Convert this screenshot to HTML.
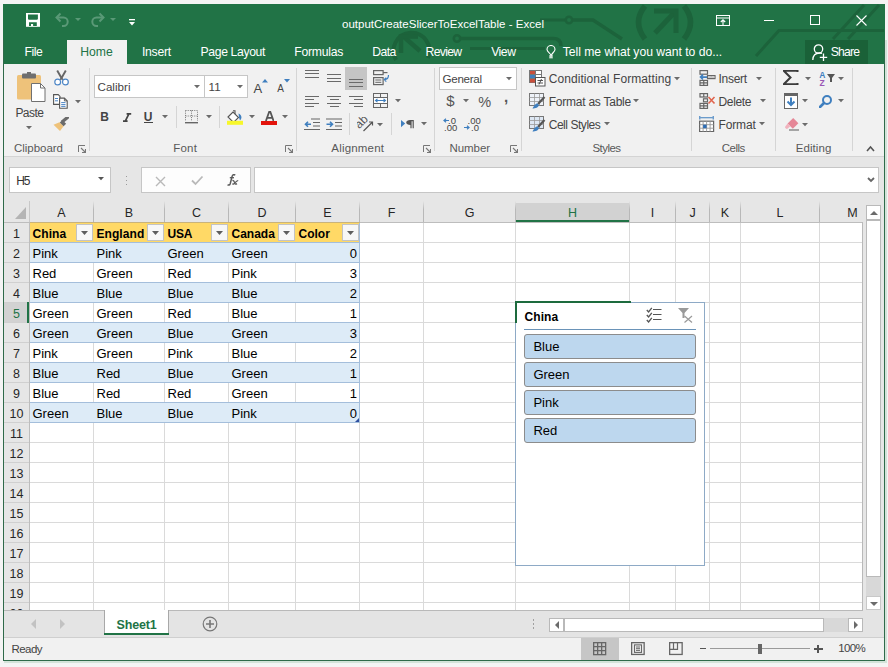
<!DOCTYPE html>
<html><head><meta charset="utf-8"><style>
html,body{margin:0;padding:0;}
body{width:888px;height:667px;position:relative;overflow:hidden;background:#f2f2f2;font-family:"Liberation Sans", sans-serif;}
.a{position:absolute;}
.t{position:absolute;white-space:nowrap;line-height:1;}
</style></head><body>
<div class="a" style="left:0px;top:0px;width:888px;height:667px;background:#f4f4f4;"></div>
<div class="a" style="left:3px;top:4px;width:882px;height:657px;background:#217346;"></div>
<div class="a" style="left:4px;top:40px;width:880px;height:620px;background:#f1f1f1;"></div>
<div class="a" style="left:4px;top:4px;width:880px;height:60px;background:#217346;"></div>
<svg class="a" style="left:0px;top:0px" width="888" height="64" viewBox="0 0 888 64"><g fill="none" stroke="#1c633b" stroke-linecap="butt">
<path d="M 396 60 A 18 18 0 1 1 428 58" stroke-width="4"/>
<path d="M 420 51 L 404 37" stroke-width="4.5"/>
<path d="M 401 53 V 36.5 H 418" stroke-width="4.5"/>
<circle cx="457" cy="38.5" r="3.2" stroke-width="2.5"/>
<path d="M 460.5 38.5 L 553 38.5 Q 561 38.5 561 46" stroke-width="3.5"/>
<path d="M 470 48.5 L 545 48.5" stroke-width="3"/>
<path d="M 540 20 L 565.5 20" stroke-width="3"/>
<circle cx="569" cy="20" r="3.2" stroke-width="2.5"/>
<path d="M 572.5 20 L 593 20 L 622 39" stroke-width="3.5"/>
<path d="M 645 6 Q 632 22 645 39" stroke-width="5.5"/>
<path d="M 684 6 Q 697 22 684 39" stroke-width="5.5"/>
<path d="M 655 33 L 674 13" stroke-width="5"/>
<path d="M 654 11 H 676 V 33" stroke-width="5"/>
<path d="M 756 56 L 779 30.5 L 884 30.5" stroke-width="3"/>
<path d="M 833 39 L 864 5" stroke-width="3"/>
<path d="M 848 39 L 879 5" stroke-width="3"/>
</g></svg>
<svg class="a" style="left:26px;top:12.8px" width="14" height="14" viewBox="0 0 14 14"><rect x="0" y="0" width="14" height="13.8" fill="#fff"/>
<path d="M2 1.4 H11.9 V6 L11.2 6.8 H2.7 L2 6 Z" fill="#217346"/>
<path d="M3 9.2 H10.8 V13.1 H7.1 V11 H5 V13.1 H3 Z" fill="#217346"/></svg>
<svg class="a" style="left:54px;top:12px" width="16" height="15" viewBox="0 0 16 15"><path d="M3 5.5 H9.5 A4.2 4.2 0 0 1 9.5 13.9 H8" fill="none" stroke="#5a9977" stroke-width="2"/>
<path d="M6.5 1.5 L2.5 5.5 L6.5 9.5" fill="none" stroke="#5a9977" stroke-width="2"/></svg>
<svg class="a" style="left:75px;top:18px" width="6" height="3" viewBox="0 0 6 3"><polygon points="0,0 6,0 3,3" fill="#5a9977"/></svg>
<svg class="a" style="left:89.5px;top:12px" width="16" height="15" viewBox="0 0 16 15"><path d="M13 5.5 H6.5 A4.2 4.2 0 0 0 6.5 13.9 H8" fill="none" stroke="#5a9977" stroke-width="2"/>
<path d="M9.5 1.5 L13.5 5.5 L9.5 9.5" fill="none" stroke="#5a9977" stroke-width="2"/></svg>
<svg class="a" style="left:109.5px;top:18px" width="6" height="3" viewBox="0 0 6 3"><polygon points="0,0 6,0 3,3" fill="#5a9977"/></svg>
<svg class="a" style="left:128.5px;top:18.5px" width="6" height="7" viewBox="0 0 6 7"><rect x="0" y="0" width="6" height="1.3" fill="#fff"/><polygon points="0,3 6,3 3,6.5" fill="#fff"/></svg>
<span class="t" id="t0" style="left:443.00px;top:18.87px;font-size:11.5px;color:#ffffff;letter-spacing:0.017px;transform:translateX(-50%);">outputCreateSlicerToExcelTable - Excel</span>
<svg class="a" style="left:715.5px;top:14.5px" width="14" height="11" viewBox="0 0 14 11"><rect x="0.5" y="0.5" width="13" height="10" fill="none" stroke="#fff" stroke-width="1"/>
<line x1="0.5" y1="3" x2="13.5" y2="3" stroke="#fff"/>
<path d="M7 10 V5 M4.8 7 L7 4.8 L9.2 7" fill="none" stroke="#fff" stroke-width="1.1"/></svg>
<div class="a" style="left:764px;top:20px;width:10px;height:1px;background:#ffffff;"></div>
<div class="a" style="left:810px;top:15px;width:10px;height:10px;border:1px solid #ffffff;box-sizing:border-box;"></div>
<svg class="a" style="left:855.5px;top:14.8px" width="11" height="11" viewBox="0 0 11 11"><path d="M0.5 0.5 L10.5 10.5 M10.5 0.5 L0.5 10.5" stroke="#fff" stroke-width="1.1"/></svg>
<div class="a" style="left:67px;top:40px;width:60px;height:24px;background:#f1f1f1;"></div>
<span class="t" id="t1" style="left:24.50px;top:46.17px;font-size:12.2px;color:#ffffff;letter-spacing:-0.485px;">File</span>
<span class="t" id="t2" style="left:80.20px;top:46.17px;font-size:12.2px;color:#217346;letter-spacing:0.021px;">Home</span>
<span class="t" id="t3" style="left:141.90px;top:46.17px;font-size:12.2px;color:#ffffff;letter-spacing:-0.247px;">Insert</span>
<span class="t" id="t4" style="left:200.60px;top:46.17px;font-size:12.2px;color:#ffffff;letter-spacing:-0.368px;">Page Layout</span>
<span class="t" id="t5" style="left:294.30px;top:46.17px;font-size:12.2px;color:#ffffff;letter-spacing:-0.250px;">Formulas</span>
<span class="t" id="t6" style="left:372.30px;top:46.17px;font-size:12.2px;color:#ffffff;letter-spacing:-0.562px;">Data</span>
<span class="t" id="t7" style="left:425.60px;top:46.17px;font-size:12.2px;color:#ffffff;letter-spacing:-0.678px;">Review</span>
<span class="t" id="t8" style="left:491.20px;top:46.17px;font-size:12.2px;color:#ffffff;letter-spacing:-0.476px;">View</span>
<svg class="a" style="left:545.5px;top:44.5px" width="10" height="14" viewBox="0 0 10 14"><path d="M5 12.5 V10.5 C5 8.5 1 7 1 4.5 A4 4 0 0 1 9 4.5 C9 7 5.5 8 5.5 10.5" fill="none" stroke="#fff" stroke-width="1.1"/>
<path d="M3 11 H7 M3.2 12.8 H6.8" stroke="#fff" stroke-width="1"/></svg>
<span class="t" id="t9" style="left:562.70px;top:46.17px;font-size:12.2px;color:#ffffff;letter-spacing:-0.035px;">Tell me what you want to do...</span>
<div class="a" style="left:805px;top:40px;width:63px;height:24px;background:#1a6138;"></div>
<svg class="a" style="left:812px;top:43.5px" width="16" height="18" viewBox="0 0 16 18"><circle cx="6.5" cy="5" r="4.2" fill="none" stroke="#fff" stroke-width="1.3"/>
<path d="M0.8 16 C1 11.5 3.5 9 7.5 9 C8.5 9 9.5 9.2 10 9.5" fill="none" stroke="#fff" stroke-width="1.3"/>
<path d="M11.5 9.5 V17 M7.8 13.3 H15.2" stroke="#fff" stroke-width="1.3"/></svg>
<span class="t" id="t10" style="left:830.70px;top:46.17px;font-size:12.2px;color:#ffffff;letter-spacing:-0.766px;">Share</span>
<div class="a" style="left:4px;top:64px;width:880px;height:92px;background:#f1f1f1;"></div>
<div class="a" style="left:4px;top:156px;width:880px;height:1px;background:#d4d4d4;"></div>
<span class="t" id="t11" style="left:14.00px;top:142.97px;font-size:11.5px;color:#595959;letter-spacing:-0.026px;">Clipboard</span>
<span class="t" id="t12" style="left:173.30px;top:142.97px;font-size:11.5px;color:#595959;letter-spacing:0.171px;">Font</span>
<span class="t" id="t13" style="left:331.30px;top:142.97px;font-size:11.5px;color:#595959;letter-spacing:0.184px;">Alignment</span>
<span class="t" id="t14" style="left:449.50px;top:142.97px;font-size:11.5px;color:#595959;letter-spacing:-0.068px;">Number</span>
<span class="t" id="t15" style="left:592.40px;top:142.97px;font-size:11.5px;color:#595959;letter-spacing:-0.538px;">Styles</span>
<span class="t" id="t16" style="left:721.80px;top:142.97px;font-size:11.5px;color:#595959;letter-spacing:-0.552px;">Cells</span>
<span class="t" id="t17" style="left:795.70px;top:142.97px;font-size:11.5px;color:#595959;letter-spacing:0.075px;">Editing</span>
<svg class="a" style="left:78px;top:144.5px" width="8" height="8" viewBox="0 0 8 8"><path d="M0.5 7 V0.5 H7" fill="none" stroke="#777" stroke-width="1"/><path d="M3 3 L7.5 7.5 M4 7.5 H7.5 V4" fill="none" stroke="#777" stroke-width="1.1"/></svg>
<svg class="a" style="left:285px;top:144.5px" width="8" height="8" viewBox="0 0 8 8"><path d="M0.5 7 V0.5 H7" fill="none" stroke="#777" stroke-width="1"/><path d="M3 3 L7.5 7.5 M4 7.5 H7.5 V4" fill="none" stroke="#777" stroke-width="1.1"/></svg>
<svg class="a" style="left:423px;top:144.5px" width="8" height="8" viewBox="0 0 8 8"><path d="M0.5 7 V0.5 H7" fill="none" stroke="#777" stroke-width="1"/><path d="M3 3 L7.5 7.5 M4 7.5 H7.5 V4" fill="none" stroke="#777" stroke-width="1.1"/></svg>
<svg class="a" style="left:510px;top:144.5px" width="8" height="8" viewBox="0 0 8 8"><path d="M0.5 7 V0.5 H7" fill="none" stroke="#777" stroke-width="1"/><path d="M3 3 L7.5 7.5 M4 7.5 H7.5 V4" fill="none" stroke="#777" stroke-width="1.1"/></svg>
<div class="a" style="left:89px;top:68px;width:1px;height:83px;background:#d5d5d5;"></div>
<div class="a" style="left:296px;top:68px;width:1px;height:83px;background:#d5d5d5;"></div>
<div class="a" style="left:434px;top:68px;width:1px;height:83px;background:#d5d5d5;"></div>
<div class="a" style="left:521px;top:68px;width:1px;height:83px;background:#d5d5d5;"></div>
<div class="a" style="left:691px;top:68px;width:1px;height:83px;background:#d5d5d5;"></div>
<div class="a" style="left:775px;top:68px;width:1px;height:83px;background:#d5d5d5;"></div>
<div class="a" style="left:852px;top:68px;width:1px;height:83px;background:#d5d5d5;"></div>
<svg class="a" style="left:865.5px;top:144.5px" width="9" height="8" viewBox="0 0 9 8"><path d="M1 6 L4.5 2 L8 6" fill="none" stroke="#555" stroke-width="1.6"/></svg>
<svg class="a" style="left:16.5px;top:72px" width="30" height="31" viewBox="0 0 30 31"><rect x="0" y="3" width="24" height="24.5" rx="1.5" fill="#eec27a"/>
<rect x="5" y="1.5" width="14" height="5" rx="1" fill="#6f6f6f"/>
<rect x="10" y="0" width="4" height="3" fill="#6f6f6f"/>
<path d="M14.5 11.5 H23.5 L28 16 V29.5 H14.5 Z" fill="#fff" stroke="#707070" stroke-width="1"/>
<path d="M23.5 11.5 V16 H28" fill="none" stroke="#707070" stroke-width="1"/></svg>
<span class="t" id="t18" style="left:15.40px;top:106.94px;font-size:12px;color:#444444;letter-spacing:-0.558px;">Paste</span>
<svg class="a" style="left:25.6px;top:126.4px" width="6" height="4" viewBox="0 0 6 4"><polygon points="0,0 6,0 3,3.2" fill="#6b6b6b"/></svg>
<svg class="a" style="left:53.5px;top:70px" width="15" height="16" viewBox="0 0 15 16"><path d="M3.2 0.5 L7.5 8 L11.8 0.5" fill="none" stroke="#666" stroke-width="1.9"/>
<path d="M7.5 8 L4.8 11 M7.5 8 L10.2 11" stroke="#666" stroke-width="1.3"/>
<circle cx="3.7" cy="12" r="2.9" fill="#fff" stroke="#4d86c6" stroke-width="1.2"/>
<circle cx="11.4" cy="12" r="2.9" fill="#fff" stroke="#4d86c6" stroke-width="1.2"/></svg>
<svg class="a" style="left:52.7px;top:93.5px" width="15" height="15" viewBox="0 0 15 15"><path d="M0.6 0.6 H5.2 L7 2.4 V10.4 H0.6 Z" fill="#fff" stroke="#555" stroke-width="1.1"/>
<path d="M6.6 4.1 H11.4 L14.2 6.9 V14.2 H6.6 Z" fill="#fff" stroke="#555" stroke-width="1.1"/>
<path d="M11.4 4.1 V6.9 H14.2" fill="none" stroke="#555" stroke-width="0.9"/>
<path d="M2 4.5 H5 M2 6.8 H5 M8.2 8.6 H12.5 M8.2 10.6 H12.5 M8.2 12.4 H12.5" stroke="#4d86c6" stroke-width="1"/></svg>
<svg class="a" style="left:74.6px;top:99.60000000000001px" width="6" height="4" viewBox="0 0 6 4"><polygon points="0,0 6,0 3,3.2" fill="#6b6b6b"/></svg>
<svg class="a" style="left:53.3px;top:117px" width="16" height="15" viewBox="0 0 16 15"><path d="M9 5 L15.5 -0.5" stroke="#6b6b6b" stroke-width="3.2"/>
<path d="M6.5 5.2 L10.6 9.2 L7 14 L0.5 7.8 Z" fill="#eec27a"/>
<path d="M6.8 5.4 L9.4 2.9 L13.1 6.7 L10.6 9.2 Z" fill="#6b6b6b"/></svg>
<div class="a" style="left:94px;top:75px;width:111px;height:23px;background:#ffffff;border:1px solid #c6c6c6;box-sizing:border-box;"></div>
<div class="a" style="left:204px;top:75px;width:44px;height:23px;background:#ffffff;border:1px solid #c6c6c6;box-sizing:border-box;"></div>
<span class="t" id="t19" style="left:97.50px;top:81.28px;font-size:11.6px;color:#444444;letter-spacing:0.020px;">Calibri</span>
<svg class="a" style="left:194.3px;top:84.60000000000001px" width="6" height="4" viewBox="0 0 6 4"><polygon points="0,0 6,0 3,3.2" fill="#6b6b6b"/></svg>
<span class="t" id="t20" style="left:208.60px;top:81.28px;font-size:11.6px;color:#444444;">11</span>
<svg class="a" style="left:237.2px;top:84.60000000000001px" width="6" height="4" viewBox="0 0 6 4"><polygon points="0,0 6,0 3,3.2" fill="#6b6b6b"/></svg>
<span class="t" id="t21" style="left:253.50px;top:81.50px;font-size:13px;color:#444444;">A</span>
<svg class="a" style="left:261.5px;top:78.5px" width="6" height="4" viewBox="0 0 6 4"><polygon points="0,3.5 6,3.5 3,0" fill="#3f7fbf"/></svg>
<span class="t" id="t22" style="left:277.30px;top:84.03px;font-size:10px;color:#444444;">A</span>
<svg class="a" style="left:283.5px;top:79px" width="6" height="4" viewBox="0 0 6 4"><polygon points="0,0 6,0 3,3.5" fill="#3f7fbf"/></svg>
<span class="t" id="t23" style="left:100.30px;top:111.04px;font-size:12px;color:#444444;font-weight:700;">B</span>
<svg class="a" style="left:122.5px;top:112.5px" width="9" height="9" viewBox="0 0 9 9"><path d="M3.6 0.8 H8.2 M0 8.2 H4.6 M5.9 0.8 L2.3 8.2" fill="none" stroke="#444" stroke-width="1.7"/></svg>
<span class="t" id="t24" style="left:143.80px;top:111.04px;font-size:12px;color:#444444;font-weight:700;">U</span>
<div class="a" style="left:144px;top:121.5px;width:9px;height:1.2px;background:#444444;"></div>
<svg class="a" style="left:162.4px;top:115.4px" width="6" height="4" viewBox="0 0 6 4"><polygon points="0,0 6,0 3,3.2" fill="#6b6b6b"/></svg>
<div class="a" style="left:176px;top:106px;width:1px;height:22px;background:#d5d5d5;"></div>
<svg class="a" style="left:185.3px;top:110px" width="13" height="14" viewBox="0 0 13 14"><g fill="#666"><rect x="0" y="12" width="13" height="1.4"/></g>
<g fill="none" stroke="#777" stroke-width="1" stroke-dasharray="1,1.2"><path d="M0.5 0.5 H12.5 V11 M0.5 0.5 V11 M6.5 0.5 V11 M0.5 6 H12.5"/></g></svg>
<svg class="a" style="left:205.6px;top:115.4px" width="6" height="4" viewBox="0 0 6 4"><polygon points="0,0 6,0 3,3.2" fill="#6b6b6b"/></svg>
<div class="a" style="left:219px;top:106px;width:1px;height:22px;background:#d5d5d5;"></div>
<svg class="a" style="left:227px;top:110px" width="16" height="15" viewBox="0 0 16 15"><path d="M6 0.8 H8 V4" fill="none" stroke="#555" stroke-width="1.1"/>
<path d="M1 7 L6 2 L11.5 7.5 L6.5 12.5 Z" fill="#fff" stroke="#555" stroke-width="1.1"/>
<path d="M11.5 3.5 C14.5 4.5 15.5 8 13 10.5 L12 7.5 Z" fill="#3f7fbf"/>
<rect x="0" y="10.8" width="16" height="4" fill="#f7f72a"/></svg>
<svg class="a" style="left:248.5px;top:115.4px" width="6" height="4" viewBox="0 0 6 4"><polygon points="0,0 6,0 3,3.2" fill="#6b6b6b"/></svg>
<svg class="a" style="left:264.8px;top:110.8px" width="9.5" height="10" viewBox="0 0 9.5 10"><path d="M0.9 10 L4.2 0.8 H5.3 L8.6 10 M2.4 6.8 H7.1" fill="none" stroke="#555" stroke-width="1.8"/></svg>
<div class="a" style="left:260.8px;top:120.7px;width:16.5px;height:4px;background:#e3140c;"></div>
<svg class="a" style="left:282.4px;top:115.4px" width="6" height="4" viewBox="0 0 6 4"><polygon points="0,0 6,0 3,3.2" fill="#6b6b6b"/></svg>
<div class="a" style="left:305px;top:69.5px;width:13.5px;height:1.2px;background:#6a6a6a;"></div>
<div class="a" style="left:305px;top:73px;width:13.5px;height:1.2px;background:#6a6a6a;"></div>
<div class="a" style="left:305px;top:76.5px;width:13.5px;height:1.2px;background:#6a6a6a;"></div>
<div class="a" style="left:327.3px;top:74px;width:13.5px;height:1.2px;background:#6a6a6a;"></div>
<div class="a" style="left:327.3px;top:77.5px;width:13.5px;height:1.2px;background:#6a6a6a;"></div>
<div class="a" style="left:327.3px;top:81px;width:13.5px;height:1.2px;background:#6a6a6a;"></div>
<div class="a" style="left:345px;top:67px;width:22px;height:23px;background:#c5c5c5;"></div>
<div class="a" style="left:349.4px;top:79px;width:13.5px;height:1.2px;background:#6a6a6a;"></div>
<div class="a" style="left:349.4px;top:82.3px;width:13.5px;height:1.2px;background:#6a6a6a;"></div>
<div class="a" style="left:349.4px;top:85.5px;width:13.5px;height:1.2px;background:#6a6a6a;"></div>
<svg class="a" style="left:373px;top:70px" width="17" height="16" viewBox="0 0 17 16"><rect x="0.6" y="0.6" width="9.5" height="4" fill="none" stroke="#666" stroke-width="1.2"/>
<path d="M10 2.6 H14.5" stroke="#666" stroke-width="1.2"/>
<rect x="0.6" y="7.6" width="9.5" height="7" fill="none" stroke="#666" stroke-width="1.2"/>
<path d="M2.3 10 H8.3 M2.3 12.3 H8.3" stroke="#666" stroke-width="1"/>
<path d="M15.5 5 C15.5 8 14 9.6 11.5 9.6 M13.3 7.6 L11.3 9.6 L13.3 11.6" fill="none" stroke="#3f7fbf" stroke-width="1.2"/></svg>
<div class="a" style="left:305px;top:96px;width:13.5px;height:1.2px;background:#6a6a6a;"></div>
<div class="a" style="left:305px;top:99.3px;width:9px;height:1.2px;background:#6a6a6a;"></div>
<div class="a" style="left:305px;top:102.6px;width:13.5px;height:1.2px;background:#6a6a6a;"></div>
<div class="a" style="left:305px;top:105.9px;width:9px;height:1.2px;background:#6a6a6a;"></div>
<div class="a" style="left:327.3px;top:96px;width:13.5px;height:1.2px;background:#6a6a6a;"></div>
<div class="a" style="left:329.55px;top:99.3px;width:9px;height:1.2px;background:#6a6a6a;"></div>
<div class="a" style="left:327.3px;top:102.6px;width:13.5px;height:1.2px;background:#6a6a6a;"></div>
<div class="a" style="left:329.55px;top:105.9px;width:9px;height:1.2px;background:#6a6a6a;"></div>
<div class="a" style="left:349.4px;top:96px;width:13.5px;height:1.2px;background:#6a6a6a;"></div>
<div class="a" style="left:353.9px;top:99.3px;width:9px;height:1.2px;background:#6a6a6a;"></div>
<div class="a" style="left:349.4px;top:102.6px;width:13.5px;height:1.2px;background:#6a6a6a;"></div>
<div class="a" style="left:353.9px;top:105.9px;width:9px;height:1.2px;background:#6a6a6a;"></div>
<svg class="a" style="left:373px;top:93px" width="15" height="15" viewBox="0 0 15 15"><rect x="0.5" y="0.5" width="14" height="14" fill="none" stroke="#666"/>
<path d="M0.5 4.5 H14.5 M0.5 10.5 H14.5 M7.5 0.5 V4.5 M7.5 10.5 V14.5" stroke="#666"/>
<rect x="1" y="5" width="13" height="5" fill="#fff"/>
<path d="M2.5 7.5 H12.5 M4.5 5.8 L2.5 7.5 L4.5 9.2 M10.5 5.8 L12.5 7.5 L10.5 9.2" fill="none" stroke="#3f7fbf" stroke-width="1.1"/></svg>
<svg class="a" style="left:394.5px;top:99.0px" width="6" height="4" viewBox="0 0 6 4"><polygon points="0,0 6,0 3,3.2" fill="#6b6b6b"/></svg>
<svg class="a" style="left:304px;top:117.5px" width="16" height="13" viewBox="0 0 16 13"><path d="M7 1 H16 M9 4.5 H16 M9 8 H16 M0 11.5 H16 M7 1" stroke="#666" stroke-width="1.2"/>
<path d="M7 6.2 H1.5 M4 3.7 L1.5 6.2 L4 8.7" fill="none" stroke="#3f7fbf" stroke-width="1.6"/></svg>
<svg class="a" style="left:326px;top:117.5px" width="16" height="13" viewBox="0 0 16 13"><path d="M0 1 H16 M9 4.5 H16 M9 8 H16 M0 11.5 H16" stroke="#666" stroke-width="1.2"/>
<path d="M0.5 6.2 H6.5 M4 3.7 L6.5 6.2 L4 8.7" fill="none" stroke="#3f7fbf" stroke-width="1.6"/></svg>
<div class="a" style="left:349px;top:113px;width:1px;height:22px;background:#d5d5d5;"></div>
<svg class="a" style="left:357px;top:116.5px" width="17" height="15" viewBox="0 0 17 15"><text x="0" y="0" font-family="Liberation Sans" font-size="12" fill="#555" transform="translate(2.2 12.2) rotate(-45)">ab</text>
<path d="M6.5 14 L15.5 5 M12 5 H15.5 V8.5" fill="none" stroke="#555" stroke-width="1.2"/></svg>
<svg class="a" style="left:376.7px;top:122.7px" width="6" height="4" viewBox="0 0 6 4"><polygon points="0,0 6,0 3,3.2" fill="#6b6b6b"/></svg>
<div class="a" style="left:391px;top:113px;width:1px;height:22px;background:#d5d5d5;"></div>
<svg class="a" style="left:401px;top:120px" width="13" height="9" viewBox="0 0 13 9"><polygon points="0,0 4.2,3.6 0,7.2" fill="#3f7fbf"/>
<path d="M9 0 H12.8 V8.2 H11.6 V1.2 H10.6 V8.2 H9.4 V5 C7 5 5.2 4 5.2 2.5 C5.2 1 7 0 9 0 Z" fill="#555"/></svg>
<svg class="a" style="left:420.5px;top:122.4px" width="6" height="4" viewBox="0 0 6 4"><polygon points="0,0 6,0 3,3.2" fill="#6b6b6b"/></svg>
<div class="a" style="left:439px;top:67px;width:78px;height:23px;background:#ffffff;border:1px solid #c6c6c6;box-sizing:border-box;"></div>
<span class="t" id="t25" style="left:442.50px;top:73.28px;font-size:11.6px;color:#444444;letter-spacing:-0.293px;">General</span>
<svg class="a" style="left:506.3px;top:76.80000000000001px" width="6" height="4" viewBox="0 0 6 4"><polygon points="0,0 6,0 3,3.2" fill="#6b6b6b"/></svg>
<span class="t" id="t26" style="left:446.30px;top:93.10px;font-size:15px;color:#555;">$</span>
<svg class="a" style="left:463.4px;top:99.4px" width="6" height="4" viewBox="0 0 6 4"><polygon points="0,0 6,0 3,3.2" fill="#6b6b6b"/></svg>
<span class="t" id="t27" style="left:478.30px;top:94.73px;font-size:14.5px;color:#555;">%</span>
<span class="t" id="t28" style="left:504.00px;top:88.80px;font-size:15px;color:#555;font-weight:700;">,</span>
<svg class="a" style="left:442.5px;top:118px" width="7" height="6" viewBox="0 0 7 6"><path d="M6 2.5 H1 M3 0.8 L1 2.5 L3 4.2" fill="none" stroke="#3f7fbf" stroke-width="1.2"/></svg>
<span class="t" id="t29" style="left:448.00px;top:116.46px;font-size:9.5px;color:#444;">.0</span>
<span class="t" id="t30" style="left:444.00px;top:123.46px;font-size:9.5px;color:#444;">.00</span>
<span class="t" id="t31" style="left:467.50px;top:116.46px;font-size:9.5px;color:#444;">.00</span>
<svg class="a" style="left:464px;top:125px" width="7" height="6" viewBox="0 0 7 6"><path d="M0 2.5 H5 M3 0.8 L5 2.5 L3 4.2" fill="none" stroke="#3f7fbf" stroke-width="1.2"/></svg>
<span class="t" id="t32" style="left:471.00px;top:123.46px;font-size:9.5px;color:#444;">.0</span>
<svg class="a" style="left:528.5px;top:70px" width="17" height="17" viewBox="0 0 17 17"><rect x="0.5" y="0.5" width="12" height="12" fill="#fff" stroke="#777"/>
<rect x="1" y="1" width="5" height="3.5" fill="#c94f3c"/><rect x="1" y="4.5" width="5" height="4" fill="#3f7fbf"/><rect x="1" y="8.5" width="5" height="4" fill="#c94f3c"/>
<path d="M6.5 0.5 V12.5 M0.5 4.5 H12.5 M0.5 8.5 H12.5" stroke="#777"/>
<rect x="6.5" y="7.5" width="9.5" height="8.5" fill="#fff" stroke="#555"/>
<path d="M8.5 10.5 H14 M8.5 13 H14 M12.5 9 L10 14.5" stroke="#444" stroke-width="0.9"/></svg>
<span class="t" id="t33" style="left:548.70px;top:73.34px;font-size:12px;color:#444444;letter-spacing:0.080px;">Conditional Formatting</span>
<svg class="a" style="left:674.4px;top:76.9px" width="6" height="4" viewBox="0 0 6 4"><polygon points="0,0 6,0 3,3.2" fill="#6b6b6b"/></svg>
<svg class="a" style="left:528.5px;top:93px" width="17" height="17" viewBox="0 0 17 17"><rect x="0.5" y="0.5" width="14" height="12" fill="#eef2f8" stroke="#777"/>
<path d="M0.5 4.5 H14.5 M0.5 8.5 H14.5 M5.5 0.5 V12.5 M10.5 0.5 V12.5" stroke="#999" stroke-width="0.8"/>
<path d="M15.5 4 L9 11" stroke="#555" stroke-width="2.2"/>
<path d="M8.5 10.5 C6 10.5 5 13 3.5 15.5 C6.5 15.5 9.5 14.5 10 12 Z" fill="#3f7fbf"/></svg>
<span class="t" id="t34" style="left:548.70px;top:95.94px;font-size:12px;color:#444444;letter-spacing:-0.235px;">Format as Table</span>
<svg class="a" style="left:633.2px;top:99.4px" width="6" height="4" viewBox="0 0 6 4"><polygon points="0,0 6,0 3,3.2" fill="#6b6b6b"/></svg>
<svg class="a" style="left:528.5px;top:116px" width="17" height="17" viewBox="0 0 17 17"><rect x="0.5" y="0.5" width="14" height="12" fill="#dde7f3" stroke="#777"/>
<path d="M0.5 4.5 H14.5 M0.5 8.5 H14.5 M5.5 0.5 V12.5 M10.5 0.5 V12.5" stroke="#999" stroke-width="0.8"/>
<path d="M15.5 4 L9 11" stroke="#555" stroke-width="2.2"/>
<path d="M8.5 10.5 C6 10.5 5 13 3.5 15.5 C6.5 15.5 9.5 14.5 10 12 Z" fill="#3f7fbf"/></svg>
<span class="t" id="t35" style="left:548.70px;top:118.94px;font-size:12px;color:#444444;letter-spacing:-0.453px;">Cell Styles</span>
<svg class="a" style="left:603.5px;top:122.4px" width="6" height="4" viewBox="0 0 6 4"><polygon points="0,0 6,0 3,3.2" fill="#6b6b6b"/></svg>
<svg class="a" style="left:698.5px;top:70px" width="17" height="16" viewBox="0 0 17 16"><g fill="none" stroke="#666" stroke-width="1.2">
<rect x="1" y="0.6" width="7.5" height="3.6"/>
<rect x="1" y="10.4" width="7.5" height="5"/>
<path d="M1 12.9 H8.5 M4.75 10.4 V15.4"/>
<rect x="8.5" y="5.6" width="7.5" height="3"/>
<path d="M12.25 5.6 V8.6"/></g>
<rect x="9.1" y="6.2" width="6.3" height="1.8" fill="#c9c9c9"/>
<path d="M8 7.1 H1.5 M4 4.7 L1.5 7.1 L4 9.5" fill="none" stroke="#3f7fbf" stroke-width="1.6"/></svg>
<span class="t" id="t36" style="left:718.50px;top:73.24px;font-size:12px;color:#444444;letter-spacing:-0.286px;">Insert</span>
<svg class="a" style="left:756.3px;top:76.9px" width="6" height="4" viewBox="0 0 6 4"><polygon points="0,0 6,0 3,3.2" fill="#6b6b6b"/></svg>
<svg class="a" style="left:698.5px;top:93px" width="17" height="16" viewBox="0 0 17 16"><g fill="none" stroke="#666" stroke-width="1.2">
<rect x="1" y="0.6" width="7.5" height="3.4"/>
<rect x="4.5" y="5.8" width="4" height="3"/>
<rect x="1" y="10.4" width="7.5" height="5"/>
<path d="M1 12.9 H8.5 M4.75 10.4 V15.4 M4.75 0.6 V4"/></g>
<path d="M9.5 4 L15.5 10.5 M15.5 4 L9.5 10.5" stroke="#e0654e" stroke-width="1.6"/></svg>
<span class="t" id="t37" style="left:718.50px;top:96.14px;font-size:12px;color:#444444;letter-spacing:-0.331px;">Delete</span>
<svg class="a" style="left:760.4px;top:99.4px" width="6" height="4" viewBox="0 0 6 4"><polygon points="0,0 6,0 3,3.2" fill="#6b6b6b"/></svg>
<svg class="a" style="left:698.5px;top:115.5px" width="16" height="16" viewBox="0 0 16 16"><path d="M1.5 1.8 H13.5 M0.8 0 V3.6 M14.2 0 V3.6" stroke="#3f7fbf" stroke-width="1.1"/>
<rect x="0.6" y="5.2" width="14" height="10.4" fill="#fff" stroke="#666" stroke-width="1.2"/>
<path d="M0.6 8.7 H14.6 M0.6 12.2 H14.6 M4.1 5.2 V15.6 M7.6 5.2 V15.6 M11.1 5.2 V15.6" stroke="#999" stroke-width="0.9"/>
<rect x="4.1" y="8.7" width="3.5" height="3.5" fill="#2e6db4"/></svg>
<span class="t" id="t38" style="left:718.50px;top:119.14px;font-size:12px;color:#444444;letter-spacing:-0.153px;">Format</span>
<svg class="a" style="left:758.5px;top:122.4px" width="6" height="4" viewBox="0 0 6 4"><polygon points="0,0 6,0 3,3.2" fill="#6b6b6b"/></svg>
<svg class="a" style="left:783px;top:70px" width="16" height="15" viewBox="0 0 16 15"><path d="M14.5 2 V0.8 H0.8 L7.5 7.5 L0.8 14.2 H14.5 V13" fill="none" stroke="#3b3b3b" stroke-width="2"/></svg>
<svg class="a" style="left:804.5px;top:76.60000000000001px" width="6" height="4" viewBox="0 0 6 4"><polygon points="0,0 6,0 3,3.2" fill="#6b6b6b"/></svg>
<span class="t" id="t39" style="left:819.30px;top:70.80px;font-size:8.5px;color:#3f7fbf;font-weight:700;">A</span>
<span class="t" id="t40" style="left:819.50px;top:79.10px;font-size:8.5px;color:#9a56b5;font-weight:700;">Z</span>
<svg class="a" style="left:826.5px;top:74px" width="8" height="8" viewBox="0 0 8 8"><polygon points="0,0 8,0 5,4 5,8 3,8 3,4" fill="#555"/></svg>
<svg class="a" style="left:837.6px;top:76.60000000000001px" width="6" height="4" viewBox="0 0 6 4"><polygon points="0,0 6,0 3,3.2" fill="#6b6b6b"/></svg>
<svg class="a" style="left:784px;top:93.2px" width="14" height="16" viewBox="0 0 14 16"><rect x="0.5" y="0.5" width="13" height="15" fill="#fff" stroke="#666"/>
<rect x="0.5" y="0.5" width="13" height="2.5" fill="#666"/>
<path d="M7 4.5 V12 M3.5 8.5 L7 12 L10.5 8.5" fill="none" stroke="#3f7fbf" stroke-width="2"/></svg>
<svg class="a" style="left:802.3px;top:99.4px" width="6" height="4" viewBox="0 0 6 4"><polygon points="0,0 6,0 3,3.2" fill="#6b6b6b"/></svg>
<svg class="a" style="left:819px;top:95px" width="13" height="13" viewBox="0 0 13 13"><circle cx="8" cy="5" r="4" fill="none" stroke="#3f7fbf" stroke-width="2"/>
<path d="M5 8 L1 12" stroke="#3f7fbf" stroke-width="2.6" stroke-linecap="round"/></svg>
<svg class="a" style="left:837.6px;top:99.4px" width="6" height="4" viewBox="0 0 6 4"><polygon points="0,0 6,0 3,3.2" fill="#6b6b6b"/></svg>
<svg class="a" style="left:784.5px;top:116.5px" width="15" height="15" viewBox="0 0 15 15"><path d="M8.2 1 L13.4 6.2 L7.8 11.8 L2.6 6.6 Z" fill="#e58797"/>
<path d="M2.6 6.6 L5.2 9.2 L2.8 11.6 C2.2 12.2 1.4 12.2 0.9 11.6 L0.4 11.1 C-0.1 10.6 -0.1 9.8 0.5 9.2 Z" fill="#f1b3be"/>
<path d="M4 13 H14" stroke="#666" stroke-width="1.1"/></svg>
<svg class="a" style="left:802.3px;top:122.9px" width="6" height="4" viewBox="0 0 6 4"><polygon points="0,0 6,0 3,3.2" fill="#6b6b6b"/></svg>
<div class="a" style="left:4px;top:157px;width:880px;height:66px;background:#e6e6e6;"></div>
<div class="a" style="left:9px;top:167px;width:102px;height:26px;background:#ffffff;border:1px solid #c6c6c6;box-sizing:border-box;"></div>
<div class="a" style="left:141px;top:167px;width:110px;height:26px;background:#fdfdfd;border:1px solid #c6c6c6;box-sizing:border-box;"></div>
<div class="a" style="left:254px;top:167px;width:625px;height:26px;background:#ffffff;border:1px solid #c6c6c6;box-sizing:border-box;"></div>
<div class="a" style="left:4px;top:222px;width:859px;height:389px;background:#ffffff;"></div>
<div class="a" style="left:4px;top:203px;width:859px;height:19px;background:#e6e6e6;"></div>
<div class="a" style="left:516px;top:203px;width:113px;height:19px;background:#d2d2d2;"></div>
<div class="a" style="left:515px;top:220px;width:115px;height:2px;background:#217346;"></div>
<div class="a" style="left:93px;top:201px;width:1px;height:21px;background:linear-gradient(#e6e6e6,#b8b8b8 40%,#b8b8b8)"></div>
<div class="a" style="left:164px;top:201px;width:1px;height:21px;background:linear-gradient(#e6e6e6,#b8b8b8 40%,#b8b8b8)"></div>
<div class="a" style="left:228px;top:201px;width:1px;height:21px;background:linear-gradient(#e6e6e6,#b8b8b8 40%,#b8b8b8)"></div>
<div class="a" style="left:295px;top:201px;width:1px;height:21px;background:linear-gradient(#e6e6e6,#b8b8b8 40%,#b8b8b8)"></div>
<div class="a" style="left:359px;top:201px;width:1px;height:21px;background:linear-gradient(#e6e6e6,#b8b8b8 40%,#b8b8b8)"></div>
<div class="a" style="left:423px;top:201px;width:1px;height:21px;background:linear-gradient(#e6e6e6,#b8b8b8 40%,#b8b8b8)"></div>
<div class="a" style="left:515px;top:201px;width:1px;height:21px;background:linear-gradient(#e6e6e6,#b8b8b8 40%,#b8b8b8)"></div>
<div class="a" style="left:629px;top:201px;width:1px;height:21px;background:linear-gradient(#e6e6e6,#b8b8b8 40%,#b8b8b8)"></div>
<div class="a" style="left:675px;top:201px;width:1px;height:21px;background:linear-gradient(#e6e6e6,#b8b8b8 40%,#b8b8b8)"></div>
<div class="a" style="left:709px;top:201px;width:1px;height:21px;background:linear-gradient(#e6e6e6,#b8b8b8 40%,#b8b8b8)"></div>
<div class="a" style="left:740px;top:201px;width:1px;height:21px;background:linear-gradient(#e6e6e6,#b8b8b8 40%,#b8b8b8)"></div>
<div class="a" style="left:819px;top:201px;width:1px;height:21px;background:linear-gradient(#e6e6e6,#b8b8b8 40%,#b8b8b8)"></div>
<div class="a" style="left:29px;top:201px;width:1px;height:21px;background:#c8c8c8;"></div>
<div class="a" style="left:4px;top:222px;width:859px;height:1px;background:#bdbdbd;"></div>
<svg class="a" style="left:15px;top:207px" width="12" height="12" viewBox="0 0 12 12"><polygon points="11,0 11,12 0,12" fill="#b4b4b4"/></svg>
<div class="a" style="left:4px;top:223px;width:25px;height:387px;background:#e6e6e6;"></div>
<div class="a" style="left:4px;top:303px;width:23px;height:19px;background:#d2d2d2;"></div>
<div class="a" style="left:29px;top:223px;width:1px;height:387px;background:#bdbdbd;"></div>
<div class="a" style="left:4px;top:242px;width:25px;height:1px;background:#d0d0d0;"></div>
<div class="a" style="left:4px;top:262px;width:25px;height:1px;background:#d0d0d0;"></div>
<div class="a" style="left:4px;top:282px;width:25px;height:1px;background:#d0d0d0;"></div>
<div class="a" style="left:4px;top:302px;width:25px;height:1px;background:#d0d0d0;"></div>
<div class="a" style="left:4px;top:322px;width:25px;height:1px;background:#d0d0d0;"></div>
<div class="a" style="left:4px;top:342px;width:25px;height:1px;background:#d0d0d0;"></div>
<div class="a" style="left:4px;top:362px;width:25px;height:1px;background:#d0d0d0;"></div>
<div class="a" style="left:4px;top:382px;width:25px;height:1px;background:#d0d0d0;"></div>
<div class="a" style="left:4px;top:402px;width:25px;height:1px;background:#d0d0d0;"></div>
<div class="a" style="left:4px;top:422px;width:25px;height:1px;background:#d0d0d0;"></div>
<div class="a" style="left:4px;top:442px;width:25px;height:1px;background:#d0d0d0;"></div>
<div class="a" style="left:4px;top:462px;width:25px;height:1px;background:#d0d0d0;"></div>
<div class="a" style="left:4px;top:482px;width:25px;height:1px;background:#d0d0d0;"></div>
<div class="a" style="left:4px;top:502px;width:25px;height:1px;background:#d0d0d0;"></div>
<div class="a" style="left:4px;top:522px;width:25px;height:1px;background:#d0d0d0;"></div>
<div class="a" style="left:4px;top:542px;width:25px;height:1px;background:#d0d0d0;"></div>
<div class="a" style="left:4px;top:562px;width:25px;height:1px;background:#d0d0d0;"></div>
<div class="a" style="left:4px;top:582px;width:25px;height:1px;background:#d0d0d0;"></div>
<div class="a" style="left:4px;top:602px;width:25px;height:1px;background:#d0d0d0;"></div>
<div class="a" style="left:30px;top:242px;width:833px;height:1px;background:#dadada;"></div>
<div class="a" style="left:30px;top:262px;width:833px;height:1px;background:#dadada;"></div>
<div class="a" style="left:30px;top:282px;width:833px;height:1px;background:#dadada;"></div>
<div class="a" style="left:30px;top:302px;width:833px;height:1px;background:#dadada;"></div>
<div class="a" style="left:30px;top:322px;width:833px;height:1px;background:#dadada;"></div>
<div class="a" style="left:30px;top:342px;width:833px;height:1px;background:#dadada;"></div>
<div class="a" style="left:30px;top:362px;width:833px;height:1px;background:#dadada;"></div>
<div class="a" style="left:30px;top:382px;width:833px;height:1px;background:#dadada;"></div>
<div class="a" style="left:30px;top:402px;width:833px;height:1px;background:#dadada;"></div>
<div class="a" style="left:30px;top:422px;width:833px;height:1px;background:#dadada;"></div>
<div class="a" style="left:30px;top:442px;width:833px;height:1px;background:#dadada;"></div>
<div class="a" style="left:30px;top:462px;width:833px;height:1px;background:#dadada;"></div>
<div class="a" style="left:30px;top:482px;width:833px;height:1px;background:#dadada;"></div>
<div class="a" style="left:30px;top:502px;width:833px;height:1px;background:#dadada;"></div>
<div class="a" style="left:30px;top:522px;width:833px;height:1px;background:#dadada;"></div>
<div class="a" style="left:30px;top:542px;width:833px;height:1px;background:#dadada;"></div>
<div class="a" style="left:30px;top:562px;width:833px;height:1px;background:#dadada;"></div>
<div class="a" style="left:30px;top:582px;width:833px;height:1px;background:#dadada;"></div>
<div class="a" style="left:30px;top:602px;width:833px;height:1px;background:#dadada;"></div>
<div class="a" style="left:93px;top:223px;width:1px;height:387px;background:#dadada;"></div>
<div class="a" style="left:164px;top:223px;width:1px;height:387px;background:#dadada;"></div>
<div class="a" style="left:228px;top:223px;width:1px;height:387px;background:#dadada;"></div>
<div class="a" style="left:295px;top:223px;width:1px;height:387px;background:#dadada;"></div>
<div class="a" style="left:359px;top:223px;width:1px;height:387px;background:#dadada;"></div>
<div class="a" style="left:423px;top:223px;width:1px;height:387px;background:#dadada;"></div>
<div class="a" style="left:515px;top:223px;width:1px;height:387px;background:#dadada;"></div>
<div class="a" style="left:629px;top:223px;width:1px;height:387px;background:#dadada;"></div>
<div class="a" style="left:675px;top:223px;width:1px;height:387px;background:#dadada;"></div>
<div class="a" style="left:709px;top:223px;width:1px;height:387px;background:#dadada;"></div>
<div class="a" style="left:740px;top:223px;width:1px;height:387px;background:#dadada;"></div>
<div class="a" style="left:819px;top:223px;width:1px;height:387px;background:#dadada;"></div>
<div class="a" style="left:862px;top:222px;width:1px;height:388px;background:#b9b9b9;"></div>
<span class="t" id="t41" style="left:61.50px;top:206.52px;font-size:12.5px;color:#262626;transform:translateX(-50%);">A</span>
<span class="t" id="t42" style="left:129.00px;top:206.52px;font-size:12.5px;color:#262626;transform:translateX(-50%);">B</span>
<span class="t" id="t43" style="left:196.50px;top:206.52px;font-size:12.5px;color:#262626;transform:translateX(-50%);">C</span>
<span class="t" id="t44" style="left:262.00px;top:206.52px;font-size:12.5px;color:#262626;transform:translateX(-50%);">D</span>
<span class="t" id="t45" style="left:327.50px;top:206.52px;font-size:12.5px;color:#262626;transform:translateX(-50%);">E</span>
<span class="t" id="t46" style="left:391.50px;top:206.52px;font-size:12.5px;color:#262626;transform:translateX(-50%);">F</span>
<span class="t" id="t47" style="left:469.50px;top:206.52px;font-size:12.5px;color:#262626;transform:translateX(-50%);">G</span>
<span class="t" id="t48" style="left:572.50px;top:206.52px;font-size:12.5px;color:#217346;transform:translateX(-50%);">H</span>
<span class="t" id="t49" style="left:652.50px;top:206.52px;font-size:12.5px;color:#262626;transform:translateX(-50%);">I</span>
<span class="t" id="t50" style="left:692.50px;top:206.52px;font-size:12.5px;color:#262626;transform:translateX(-50%);">J</span>
<span class="t" id="t51" style="left:725.00px;top:206.52px;font-size:12.5px;color:#262626;transform:translateX(-50%);">K</span>
<span class="t" id="t52" style="left:780.00px;top:206.52px;font-size:12.5px;color:#262626;transform:translateX(-50%);">L</span>
<span class="t" id="t53" style="left:852.50px;top:206.52px;font-size:12.5px;color:#262626;transform:translateX(-50%);">M</span>
<span class="t" id="t54" style="left:16.50px;top:227.62px;font-size:12.5px;color:#262626;transform:translateX(-50%);">1</span>
<span class="t" id="t55" style="left:16.50px;top:247.62px;font-size:12.5px;color:#262626;transform:translateX(-50%);">2</span>
<span class="t" id="t56" style="left:16.50px;top:267.62px;font-size:12.5px;color:#262626;transform:translateX(-50%);">3</span>
<span class="t" id="t57" style="left:16.50px;top:287.62px;font-size:12.5px;color:#262626;transform:translateX(-50%);">4</span>
<span class="t" id="t58" style="left:16.50px;top:307.62px;font-size:12.5px;color:#217346;transform:translateX(-50%);">5</span>
<span class="t" id="t59" style="left:16.50px;top:327.62px;font-size:12.5px;color:#262626;transform:translateX(-50%);">6</span>
<span class="t" id="t60" style="left:16.50px;top:347.62px;font-size:12.5px;color:#262626;transform:translateX(-50%);">7</span>
<span class="t" id="t61" style="left:16.50px;top:367.62px;font-size:12.5px;color:#262626;transform:translateX(-50%);">8</span>
<span class="t" id="t62" style="left:16.50px;top:387.62px;font-size:12.5px;color:#262626;transform:translateX(-50%);">9</span>
<span class="t" id="t63" style="left:16.50px;top:407.62px;font-size:12.5px;color:#262626;transform:translateX(-50%);">10</span>
<span class="t" id="t64" style="left:16.50px;top:427.62px;font-size:12.5px;color:#262626;transform:translateX(-50%);">11</span>
<span class="t" id="t65" style="left:16.50px;top:447.62px;font-size:12.5px;color:#262626;transform:translateX(-50%);">12</span>
<span class="t" id="t66" style="left:16.50px;top:467.62px;font-size:12.5px;color:#262626;transform:translateX(-50%);">13</span>
<span class="t" id="t67" style="left:16.50px;top:487.62px;font-size:12.5px;color:#262626;transform:translateX(-50%);">14</span>
<span class="t" id="t68" style="left:16.50px;top:507.62px;font-size:12.5px;color:#262626;transform:translateX(-50%);">15</span>
<span class="t" id="t69" style="left:16.50px;top:527.62px;font-size:12.5px;color:#262626;transform:translateX(-50%);">16</span>
<span class="t" id="t70" style="left:16.50px;top:547.62px;font-size:12.5px;color:#262626;transform:translateX(-50%);">17</span>
<span class="t" id="t71" style="left:16.50px;top:567.62px;font-size:12.5px;color:#262626;transform:translateX(-50%);">18</span>
<span class="t" id="t72" style="left:16.50px;top:587.62px;font-size:12.5px;color:#262626;transform:translateX(-50%);">19</span>
<span class="t" id="t73" style="left:16.50px;top:607.62px;font-size:12.5px;color:#262626;transform:translateX(-50%);">20</span>
<div class="a" style="left:30px;top:223px;width:329px;height:19px;background:#ffd966;"></div>
<div class="a" style="left:30px;top:243px;width:329px;height:19px;background:#ddebf7;"></div>
<div class="a" style="left:30px;top:283px;width:329px;height:19px;background:#ddebf7;"></div>
<div class="a" style="left:30px;top:323px;width:329px;height:19px;background:#ddebf7;"></div>
<div class="a" style="left:30px;top:363px;width:329px;height:19px;background:#ddebf7;"></div>
<div class="a" style="left:30px;top:403px;width:329px;height:19px;background:#ddebf7;"></div>
<div class="a" style="left:30px;top:242px;width:330px;height:1px;background:#a4bedb;"></div>
<div class="a" style="left:30px;top:262px;width:330px;height:1px;background:#a4bedb;"></div>
<div class="a" style="left:30px;top:282px;width:330px;height:1px;background:#a4bedb;"></div>
<div class="a" style="left:30px;top:302px;width:330px;height:1px;background:#a4bedb;"></div>
<div class="a" style="left:30px;top:322px;width:330px;height:1px;background:#a4bedb;"></div>
<div class="a" style="left:30px;top:342px;width:330px;height:1px;background:#a4bedb;"></div>
<div class="a" style="left:30px;top:362px;width:330px;height:1px;background:#a4bedb;"></div>
<div class="a" style="left:30px;top:382px;width:330px;height:1px;background:#a4bedb;"></div>
<div class="a" style="left:30px;top:402px;width:330px;height:1px;background:#a4bedb;"></div>
<div class="a" style="left:30px;top:422px;width:330px;height:1px;background:#a4bedb;"></div>
<div class="a" style="left:359px;top:223px;width:1px;height:199px;background:#a4bedb;"></div>
<div class="a" style="left:30px;top:222px;width:330px;height:1px;background:#c9b37a;"></div>
<div class="a" style="left:76px;top:224px;width:17px;height:17px;background:#f7f7f7;border:1px solid #c3c3c3;box-sizing:border-box;"></div>
<svg class="a" style="left:81px;top:231px" width="7" height="4" viewBox="0 0 7 4"><polygon points="0,0 7,0 3.5,4" fill="#5e5e5e"/></svg>
<div class="a" style="left:147px;top:224px;width:17px;height:17px;background:#f7f7f7;border:1px solid #c3c3c3;box-sizing:border-box;"></div>
<svg class="a" style="left:152px;top:231px" width="7" height="4" viewBox="0 0 7 4"><polygon points="0,0 7,0 3.5,4" fill="#5e5e5e"/></svg>
<div class="a" style="left:211px;top:224px;width:17px;height:17px;background:#f7f7f7;border:1px solid #c3c3c3;box-sizing:border-box;"></div>
<svg class="a" style="left:216px;top:231px" width="7" height="4" viewBox="0 0 7 4"><polygon points="0,0 7,0 3.5,4" fill="#5e5e5e"/></svg>
<div class="a" style="left:278px;top:224px;width:17px;height:17px;background:#f7f7f7;border:1px solid #c3c3c3;box-sizing:border-box;"></div>
<svg class="a" style="left:283px;top:231px" width="7" height="4" viewBox="0 0 7 4"><polygon points="0,0 7,0 3.5,4" fill="#5e5e5e"/></svg>
<div class="a" style="left:342px;top:224px;width:17px;height:17px;background:#f7f7f7;border:1px solid #c3c3c3;box-sizing:border-box;"></div>
<svg class="a" style="left:347px;top:231px" width="7" height="4" viewBox="0 0 7 4"><polygon points="0,0 7,0 3.5,4" fill="#5e5e5e"/></svg>
<span class="t" id="t74" style="left:32.50px;top:227.94px;font-size:12px;color:#000;font-weight:700;letter-spacing:0.071px;">China</span>
<span class="t" id="t75" style="left:96.50px;top:227.94px;font-size:12px;color:#000;font-weight:700;letter-spacing:0.065px;">England</span>
<span class="t" id="t76" style="left:167.50px;top:227.94px;font-size:12px;color:#000;font-weight:700;letter-spacing:-0.181px;">USA</span>
<span class="t" id="t77" style="left:231.50px;top:227.94px;font-size:12px;color:#000;font-weight:700;">Canada</span>
<span class="t" id="t78" style="left:298.50px;top:227.94px;font-size:12px;color:#000;font-weight:700;">Color</span>
<span class="t" id="t79" style="left:32.50px;top:247.10px;font-size:13px;color:#000;">Pink</span>
<span class="t" id="t80" style="left:96.50px;top:247.10px;font-size:13px;color:#000;">Pink</span>
<span class="t" id="t81" style="left:167.50px;top:247.10px;font-size:13px;color:#000;">Green</span>
<span class="t" id="t82" style="left:231.50px;top:247.10px;font-size:13px;color:#000;">Green</span>
<span class="t" id="t83" style="left:357.00px;top:247.10px;font-size:13px;color:#000;transform:translateX(-100%);">0</span>
<span class="t" id="t84" style="left:32.50px;top:267.10px;font-size:13px;color:#000;">Red</span>
<span class="t" id="t85" style="left:96.50px;top:267.10px;font-size:13px;color:#000;">Green</span>
<span class="t" id="t86" style="left:167.50px;top:267.10px;font-size:13px;color:#000;">Red</span>
<span class="t" id="t87" style="left:231.50px;top:267.10px;font-size:13px;color:#000;">Pink</span>
<span class="t" id="t88" style="left:357.00px;top:267.10px;font-size:13px;color:#000;transform:translateX(-100%);">3</span>
<span class="t" id="t89" style="left:32.50px;top:287.10px;font-size:13px;color:#000;">Blue</span>
<span class="t" id="t90" style="left:96.50px;top:287.10px;font-size:13px;color:#000;">Blue</span>
<span class="t" id="t91" style="left:167.50px;top:287.10px;font-size:13px;color:#000;">Blue</span>
<span class="t" id="t92" style="left:231.50px;top:287.10px;font-size:13px;color:#000;">Blue</span>
<span class="t" id="t93" style="left:357.00px;top:287.10px;font-size:13px;color:#000;transform:translateX(-100%);">2</span>
<span class="t" id="t94" style="left:32.50px;top:307.10px;font-size:13px;color:#000;">Green</span>
<span class="t" id="t95" style="left:96.50px;top:307.10px;font-size:13px;color:#000;">Green</span>
<span class="t" id="t96" style="left:167.50px;top:307.10px;font-size:13px;color:#000;">Red</span>
<span class="t" id="t97" style="left:231.50px;top:307.10px;font-size:13px;color:#000;">Blue</span>
<span class="t" id="t98" style="left:357.00px;top:307.10px;font-size:13px;color:#000;transform:translateX(-100%);">1</span>
<span class="t" id="t99" style="left:32.50px;top:327.10px;font-size:13px;color:#000;">Green</span>
<span class="t" id="t100" style="left:96.50px;top:327.10px;font-size:13px;color:#000;">Green</span>
<span class="t" id="t101" style="left:167.50px;top:327.10px;font-size:13px;color:#000;">Blue</span>
<span class="t" id="t102" style="left:231.50px;top:327.10px;font-size:13px;color:#000;">Green</span>
<span class="t" id="t103" style="left:357.00px;top:327.10px;font-size:13px;color:#000;transform:translateX(-100%);">3</span>
<span class="t" id="t104" style="left:32.50px;top:347.10px;font-size:13px;color:#000;">Pink</span>
<span class="t" id="t105" style="left:96.50px;top:347.10px;font-size:13px;color:#000;">Green</span>
<span class="t" id="t106" style="left:167.50px;top:347.10px;font-size:13px;color:#000;">Pink</span>
<span class="t" id="t107" style="left:231.50px;top:347.10px;font-size:13px;color:#000;">Blue</span>
<span class="t" id="t108" style="left:357.00px;top:347.10px;font-size:13px;color:#000;transform:translateX(-100%);">2</span>
<span class="t" id="t109" style="left:32.50px;top:367.10px;font-size:13px;color:#000;">Blue</span>
<span class="t" id="t110" style="left:96.50px;top:367.10px;font-size:13px;color:#000;">Red</span>
<span class="t" id="t111" style="left:167.50px;top:367.10px;font-size:13px;color:#000;">Blue</span>
<span class="t" id="t112" style="left:231.50px;top:367.10px;font-size:13px;color:#000;">Green</span>
<span class="t" id="t113" style="left:357.00px;top:367.10px;font-size:13px;color:#000;transform:translateX(-100%);">1</span>
<span class="t" id="t114" style="left:32.50px;top:387.10px;font-size:13px;color:#000;">Blue</span>
<span class="t" id="t115" style="left:96.50px;top:387.10px;font-size:13px;color:#000;">Red</span>
<span class="t" id="t116" style="left:167.50px;top:387.10px;font-size:13px;color:#000;">Red</span>
<span class="t" id="t117" style="left:231.50px;top:387.10px;font-size:13px;color:#000;">Green</span>
<span class="t" id="t118" style="left:357.00px;top:387.10px;font-size:13px;color:#000;transform:translateX(-100%);">1</span>
<span class="t" id="t119" style="left:32.50px;top:407.10px;font-size:13px;color:#000;">Green</span>
<span class="t" id="t120" style="left:96.50px;top:407.10px;font-size:13px;color:#000;">Blue</span>
<span class="t" id="t121" style="left:167.50px;top:407.10px;font-size:13px;color:#000;">Blue</span>
<span class="t" id="t122" style="left:231.50px;top:407.10px;font-size:13px;color:#000;">Pink</span>
<span class="t" id="t123" style="left:357.00px;top:407.10px;font-size:13px;color:#000;transform:translateX(-100%);">0</span>
<svg class="a" style="left:355px;top:418px" width="4" height="4" viewBox="0 0 4 4"><polygon points="4,0 4,4 0,4" fill="#2f4f9f"/></svg>
<div class="a" style="left:27px;top:302px;width:2px;height:21px;background:#217346;"></div>
<span class="t" id="t124" style="left:16.20px;top:175.14px;font-size:12px;color:#333;letter-spacing:-1.172px;">H5</span>
<svg class="a" style="left:97.5px;top:177.0px" width="6" height="4" viewBox="0 0 6 4"><polygon points="0,0 6,0 3,3.2" fill="#555"/></svg>
<div class="a" style="left:125.5px;top:175.5px;width:1.5px;height:1.8px;background:#9a9a9a;"></div>
<div class="a" style="left:125.5px;top:179.5px;width:1.5px;height:1.8px;background:#9a9a9a;"></div>
<div class="a" style="left:125.5px;top:183.5px;width:1.5px;height:1.8px;background:#9a9a9a;"></div>
<svg class="a" style="left:154.5px;top:175.5px" width="11" height="11" viewBox="0 0 11 11"><path d="M1 1 L10 10 M10 1 L1 10" stroke="#b9b9b9" stroke-width="1.4"/></svg>
<svg class="a" style="left:190.5px;top:175px" width="13" height="11" viewBox="0 0 13 11"><path d="M1 5.5 L4.5 9 L11.5 1.5" fill="none" stroke="#b9b9b9" stroke-width="1.8"/></svg>
<svg class="a" style="left:226px;top:174px" width="13" height="13" viewBox="0 0 13 13"><path d="M9.2 1.2 C8.2 0.3 6.6 0.6 6.1 2.4 L4.2 9.8 C3.8 11.2 2.6 11.4 1.6 10.6" fill="none" stroke="#5a5a5a" stroke-width="1.5"/>
<path d="M3.8 3.7 H8" stroke="#5a5a5a" stroke-width="1.3"/>
<path d="M6.4 6.5 C7.5 6.2 8 7 8.6 8.5 L9.3 9.8 C9.8 10.4 10.4 10 11 9.6 M12.2 6.6 C11.2 6.4 10.4 7.4 9.2 8.6 L7.8 9.9 C7.2 10.2 6.6 10 6.2 9.7" fill="none" stroke="#5a5a5a" stroke-width="1.3"/></svg>
<svg class="a" style="left:866.5px;top:177px" width="8" height="6" viewBox="0 0 8 6"><path d="M1 1 L4 4 L7 1" fill="none" stroke="#666" stroke-width="1.8"/></svg>
<div class="a" style="left:515px;top:302px;width:190px;height:264px;background:#ffffff;border:1px solid #8eaac6;box-sizing:border-box;"></div>
<div class="a" style="left:515px;top:301px;width:116px;height:2px;background:#1d6b3e;"></div>
<div class="a" style="left:515px;top:301px;width:2px;height:22px;background:#1d6b3e;"></div>
<span class="t" id="t125" style="left:524.50px;top:310.94px;font-size:12px;color:#000;font-weight:700;letter-spacing:0.071px;">China</span>
<div class="a" style="left:524px;top:329px;width:172px;height:1.3px;background:#6a93b8;"></div>
<svg class="a" style="left:646px;top:307px" width="16" height="16" viewBox="0 0 16 16"><path d="M0.8 3 L2.6 5 L5.8 0.8 M0.8 8 L2.6 10 L5.8 5.8 M0.8 13 L2.6 15 L5.8 10.8" fill="none" stroke="#555" stroke-width="1.3"/>
<path d="M7 2.5 H15.5 M7 7.5 H15.5 M7 12.5 H15.5" stroke="#555" stroke-width="1"/></svg>
<svg class="a" style="left:678px;top:308px" width="15" height="15" viewBox="0 0 15 15"><polygon points="0,0 11,0 6.5,5 6.5,10 4.5,10 4.5,5" fill="#9a9a9a"/>
<path d="M6.5 8 L14 14.5 M14 8 L6.5 14.5" stroke="#9a9a9a" stroke-width="1.2"/></svg>
<div class="a" style="left:524px;top:334px;width:172px;height:25px;box-sizing:border-box;background:#bdd7ee;border:1px solid #8c8c8c;border-radius:3px"></div>
<span class="t" id="t126" style="left:533.40px;top:340.10px;font-size:13px;color:#000;">Blue</span>
<div class="a" style="left:524px;top:362px;width:172px;height:25px;box-sizing:border-box;background:#bdd7ee;border:1px solid #8c8c8c;border-radius:3px"></div>
<span class="t" id="t127" style="left:533.40px;top:368.10px;font-size:13px;color:#000;">Green</span>
<div class="a" style="left:524px;top:390px;width:172px;height:25px;box-sizing:border-box;background:#bdd7ee;border:1px solid #8c8c8c;border-radius:3px"></div>
<span class="t" id="t128" style="left:533.40px;top:396.10px;font-size:13px;color:#000;">Pink</span>
<div class="a" style="left:524px;top:418px;width:172px;height:25px;box-sizing:border-box;background:#bdd7ee;border:1px solid #8c8c8c;border-radius:3px"></div>
<span class="t" id="t129" style="left:533.40px;top:424.10px;font-size:13px;color:#000;">Red</span>
<div class="a" style="left:863px;top:203px;width:21px;height:407px;background:#e6e6e6;"></div>
<div class="a" style="left:866px;top:205px;width:15px;height:15px;background:#ffffff;border:1px solid #b9b9b9;box-sizing:border-box;"></div>
<svg class="a" style="left:869.5px;top:210.5px" width="8" height="5" viewBox="0 0 8 5"><polygon points="0,4 8,4 4,0" fill="#6b6b6b"/></svg>
<div class="a" style="left:866px;top:220px;width:15px;height:357px;background:#ffffff;border:1px solid #b9b9b9;box-sizing:border-box;"></div>
<div class="a" style="left:866px;top:577px;width:15px;height:19px;background:#d8d8d8;"></div>
<div class="a" style="left:866px;top:596px;width:15px;height:14px;background:#ffffff;border:1px solid #c8c8c8;box-sizing:border-box;"></div>
<svg class="a" style="left:869.5px;top:601.5px" width="8" height="5" viewBox="0 0 8 5"><polygon points="0,0 8,0 4,4" fill="#6b6b6b"/></svg>
<div class="a" style="left:4px;top:610px;width:880px;height:28px;background:#e4e4e4;"></div>
<div class="a" style="left:4px;top:610px;width:859px;height:1px;background:#b9b9b9;"></div>
<svg class="a" style="left:30.5px;top:619px" width="6" height="10" viewBox="0 0 6 10"><polygon points="5,0 5,10 0,5" fill="#c2c2c2"/></svg>
<svg class="a" style="left:59.5px;top:619px" width="6" height="10" viewBox="0 0 6 10"><polygon points="0,0 0,10 5,5" fill="#c2c2c2"/></svg>
<div class="a" style="left:104px;top:610px;width:65px;height:24px;background:#ffffff;"></div>
<div class="a" style="left:104px;top:610px;width:1px;height:24px;background:#a8a8a8;"></div>
<div class="a" style="left:168px;top:610px;width:1px;height:24px;background:#a8a8a8;"></div>
<div class="a" style="left:104px;top:633px;width:65px;height:2px;background:#217346;"></div>
<span class="t" id="t130" style="left:116.50px;top:619.42px;font-size:12.5px;color:#217346;font-weight:700;letter-spacing:-0.167px;">Sheet1</span>
<svg class="a" style="left:202px;top:615.5px" width="16" height="16" viewBox="0 0 16 16"><circle cx="8" cy="8" r="6.8" fill="none" stroke="#777" stroke-width="1.2"/><path d="M8 4 V12 M4 8 H12" stroke="#777" stroke-width="1.6"/></svg>
<div class="a" style="left:532.5px;top:619px;width:1.6px;height:2px;background:#a0a0a0;"></div>
<div class="a" style="left:532.5px;top:623px;width:1.6px;height:2px;background:#a0a0a0;"></div>
<div class="a" style="left:532.5px;top:627px;width:1.6px;height:2px;background:#a0a0a0;"></div>
<div class="a" style="left:549px;top:618px;width:15px;height:14px;background:#ffffff;border:1px solid #b9b9b9;box-sizing:border-box;"></div>
<svg class="a" style="left:554.5px;top:621px" width="5" height="8" viewBox="0 0 5 8"><polygon points="4,0 4,8 0,4" fill="#6b6b6b"/></svg>
<div class="a" style="left:564px;top:618px;width:260px;height:14px;background:#ffffff;border:1px solid #b9b9b9;box-sizing:border-box;"></div>
<div class="a" style="left:824px;top:618px;width:24px;height:14px;background:#d8d8d8;"></div>
<div class="a" style="left:848px;top:618px;width:15px;height:14px;background:#ffffff;border:1px solid #b9b9b9;box-sizing:border-box;"></div>
<svg class="a" style="left:854px;top:621px" width="5" height="8" viewBox="0 0 5 8"><polygon points="0,0 0,8 4,4" fill="#6b6b6b"/></svg>
<div class="a" style="left:863px;top:610px;width:21px;height:28px;background:#e4e4e4;"></div>
<div class="a" style="left:4px;top:638px;width:880px;height:22px;background:#f1f1f1;"></div>
<div class="a" style="left:4px;top:637px;width:880px;height:1px;background:#cfcfcf;"></div>
<span class="t" id="t131" style="left:11.50px;top:643.97px;font-size:11.5px;color:#444;letter-spacing:-0.550px;">Ready</span>
<div class="a" style="left:581px;top:638px;width:38px;height:22px;background:#c6c6c6;"></div>
<svg class="a" style="left:592.8px;top:642px" width="14" height="14" viewBox="0 0 14 14"><rect x="0.65" y="0.65" width="12" height="12" fill="none" stroke="#666" stroke-width="1.3"/>
<path d="M4.65 0.5 V12.5 M8.65 0.5 V12.5 M0.5 4.65 H12.5 M0.5 8.65 H12.5" stroke="#666" stroke-width="1.3"/></svg>
<svg class="a" style="left:631px;top:642px" width="14" height="14" viewBox="0 0 14 14"><rect x="0.65" y="0.65" width="12.5" height="11.8" fill="none" stroke="#666" stroke-width="1.3"/>
<rect x="3.5" y="2.9" width="7" height="7.5" fill="none" stroke="#666" stroke-width="1.1"/>
<path d="M5 5 H9 M5 6.7 H9 M5 8.4 H9" stroke="#666" stroke-width="1"/></svg>
<svg class="a" style="left:669px;top:642px" width="14" height="14" viewBox="0 0 14 14"><rect x="0.65" y="0.65" width="12.5" height="11.8" fill="none" stroke="#666" stroke-width="1.3"/>
<path d="M4.5 0.5 V7.4 M8.5 0.5 V7.4 H0.5" fill="none" stroke="#666" stroke-width="1.2"/></svg>
<div class="a" style="left:700px;top:647.5px;width:6px;height:1.8px;background:#555;"></div>
<div class="a" style="left:710px;top:648px;width:100px;height:1px;background:#9a9a9a;"></div>
<div class="a" style="left:758px;top:643.5px;width:4px;height:10px;background:#666;"></div>
<div class="a" style="left:814px;top:647.8px;width:8.5px;height:1.8px;background:#555;"></div>
<div class="a" style="left:817.3px;top:644.6px;width:1.8px;height:8.3px;background:#555;"></div>
<span class="t" id="t132" style="left:838.30px;top:643.17px;font-size:11.5px;color:#444;letter-spacing:-0.680px;">100%</span>
<div class="a" style="left:3px;top:40px;width:1px;height:621px;background:#2f6a4a;"></div>
<div class="a" style="left:884px;top:40px;width:1px;height:621px;background:#2f6a4a;"></div>
<div class="a" style="left:3px;top:660px;width:882px;height:1px;background:#2f6a4a;"></div>
<div class="a" style="left:4px;top:661px;width:881px;height:2px;background:#d3e3d9;"></div>
<div class="a" style="left:885px;top:40px;width:2px;height:623px;background:#d3e3d9;"></div>
</body></html>
